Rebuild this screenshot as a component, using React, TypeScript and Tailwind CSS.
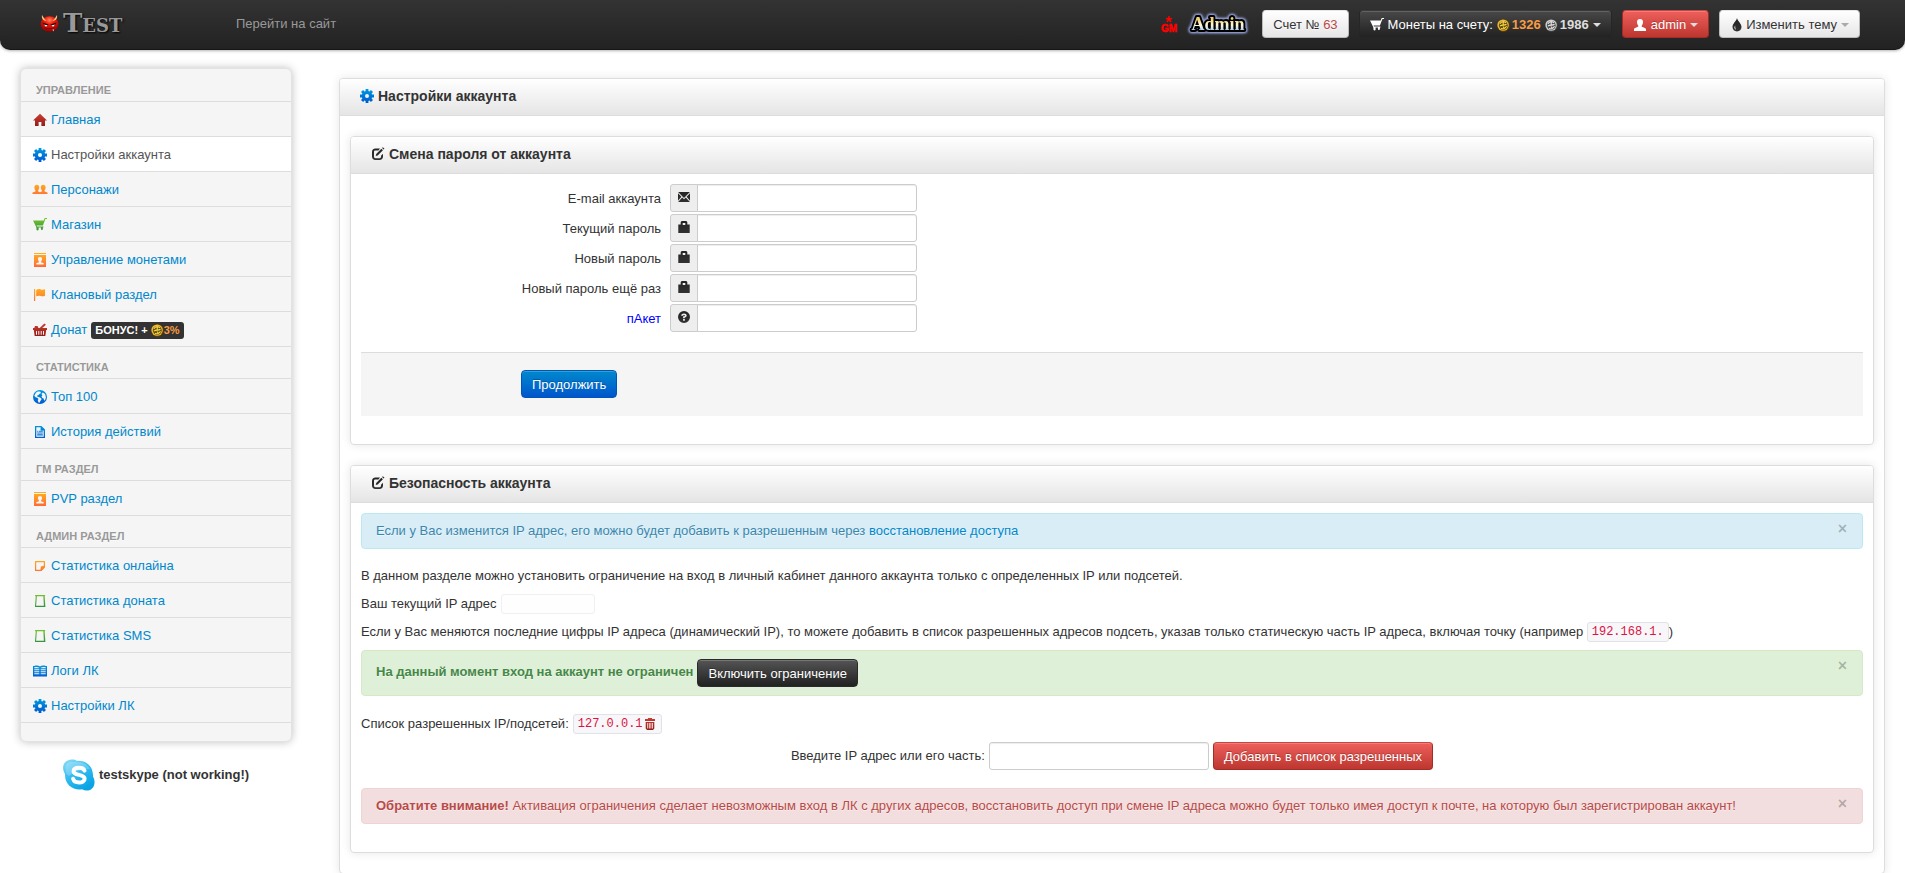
import { useId } from "react";
import type { ReactNode } from "react";

type Tone = "red" | "blue" | "orange" | "green" | "dark" | "white";

const tones: Record<Tone, [string, string]> = {
  red: ["#cf3f35", "#8f1a16"],
  blue: ["#009be0", "#0058d0"],
  orange: ["#ffb21e", "#ff6a34"],
  green: ["#7ac52f", "#2f8f3d"],
  dark: ["#222222", "#333333"],
  white: ["#ffffff", "#ffffff"],
};

type IconName =
  | "home" | "cog" | "users" | "cart" | "contact" | "flag" | "basket" | "globe" | "file"
  | "note" | "frame" | "book" | "edit" | "mail" | "lock" | "help" | "trash" | "user" | "drop";

const shapes: Record<IconName, ReactNode> = {
  home: <path d="M7 .8 14 7.6h-2V13H8.4V9H5.6v4H2V7.6H0L7 .8Z" />,
  cog: (
    <path
      fillRule="evenodd"
      d="M5.6 0h2.8v1.9l1.1.5L10.9 1l2.1 2.1-1.4 1.4.5 1.1H14v2.8h-1.9l-.5 1.1 1.4 1.4-2.1 2.1-1.4-1.4-1.1.5V14H5.6v-1.9l-1.1-.5L3.1 13 1 10.900l1.400-1.400-.5-1.100H0V5.600h1.900l.5-1.100L1 3.100 3.100 1l1.400 1.400 1.100-.5V0ZM7 5a2 2 0 1 0 0 4 2 2 0 0 0 0-4Z"
    />
  ),
  users: (
    <path d="M3.800 1.800c1.500 0 2.400 1 2.400 2.600 0 1.100-.4 2.100-1 2.700v1.400L7 9.200l1.800-.7V7.100c-.6-.6-1-1.600-1-2.700 0-1.600.9-2.600 2.400-2.600s2.400 1 2.400 2.600c0 1.100-.4 2.100-1 2.700v1.400l2.900 1V11H-.5V9.500l2.900-1V7.100c-.6-.6-1-1.600-1-2.700 0-1.600.9-2.600 2.400-2.600Z" />
  ),
  cart: (
    <path d="M0 2.500h10.700L11.700 0H14v1h-1.600l-2.500 6.500H3.600l.3 1h6.500v1H9.900V11a1 1 0 1 1-2 0V9.500H5.600V11a1.100 1.100 0 1 1-2.100 0l-.3-2L0 2.500Z" />
  ),
  contact: (
    <>
      <path d="M1 0h12v1H1z" />
      <path fillRule="evenodd" d="M1 2h12v12H1V2Zm6 2c-1.400 0-2.100.9-2.100 2.100 0 .9.300 1.600.9 2v1.300L3.300 10v1.500h7.400V10l-2.500-.6V8.100c.6-.4.9-1.100.9-2C9.100 4.900 8.400 4 7 4Z" />
    </>
  ),
  flag: <path d="M1 1h1.200v12H1V1Zm2.200.9c1.800-1 3.200-1 4.700-.4 1.500.5 2.500.3 4.100-.2v6.500c-1.600.6-2.800.7-4.300.2-1.400-.5-2.700-.5-4.500.3V1.900Z" />,
  basket: (
    <path fillRule="evenodd" d="M11.300.4 13 1.800 9.200 5H14v2h-.8l-.9 6H1.700L.8 7H0V5h6.700l4.600-4.600ZM2 3h2.500l1 2H1.300L2 3Zm1 5v3.800h1V8H3Zm2.300 0v3.800h1V8h-1Zm2.400 0v3.800h1V8h-1ZM10 8v3.800h1V8h-1Z" />
  ),
  globe: (
    <path fillRule="evenodd" d="M7 0a7 7 0 1 1 0 14A7 7 0 0 1 7 0ZM4.600 1.600 2.900 2.700 1.300 5.800l1.300 1.500 1.700.4 1.200 1.400-.8 1 .8 2.400 1 .3 1-2 1-1.400-.3-1.100-2.400-1.300-1.300-.3-.5-1 1.500-.8.9-1 1.700-1-1-1.300H4.600Zm5.200.8L8.400 4l1 1.300-.9 1.300.8 1.400 1.400.4.4 2.400 1.300-1.300.5-2.300-.8-3.200-2.300-1.600Z" />
  ),
  file: (
    <path fillRule="evenodd" d="M2 1h6.500L12 4.500V13H2V1Zm1.300 1.300v9.400h7.400V5.400H7.600V2.300H3.300Zm.9 3.500h1.200v1H4.200v-1Zm1.800 0h3.800v1H6v-1ZM4.200 7.600h5.600v1H4.200v-1Zm0 1.600h5.600v1.300H4.200V9.200Z" />
  ),
  note: <path fillRule="evenodd" d="M2 2h10v6.500L8.500 12H2V2Zm1.200 1.200v7.600h4.200l.5-3.200 2.900-.8V3.200H3.200Z" />,
  frame: <path fillRule="evenodd" d="M1.800 1h10.500l-.6 1.800.7 10.200H2l.7-10.200L1.800 1Zm2.100 1.300-.8 9.400h7.800l-.6-9.400H3.900Z" />,
  book: (
    <path fillRule="evenodd" d="M0 2h1.200C3.600 1.300 5.400 1.400 7 2.400c1.600-1 3.400-1.100 5.800-.4H14v10.500H0V2Zm1.300 1.300v1h5v-.6c-1.500-.8-3-.8-5-.4Zm6.400.4v.6h5v-1c-2-.4-3.500-.4-5 .4ZM1.300 5.300v1h5v-1h-5Zm6.400 0v1h5v-1h-5Zm-6.400 2v1h5v-1h-5Zm6.400 0v1h5v-1h-5Zm-6.400 2v1h5v-1h-5Zm6.400 0v1h5v-1h-5Z" />
  ),
  edit: (
    <>
      <path d="M9 1.500H4.500C2.300 1.500 1 2.800 1 5v4.500C1 11.700 2.300 13 4.500 13h4c2.200 0 3.500-1.300 3.500-3.500V6.800l-2 2v1c0 .9-.5 1.400-1.400 1.400H4.400C3.500 11.200 3 10.700 3 9.800V4.900c0-.9.5-1.400 1.400-1.400h3L9 1.500Z" />
      <path d="m10.400 1.700 1.500 1.500-5.200 5.200-2 .6.500-2.100 5.200-5.200Zm.7-.7.700-.7 1.700 1.500-.9.8L11.100 1Z" />
    </>
  ),
  mail: (
    <path d="M1.100 2h11.800L7 7.900 1.100 2ZM1 3.200l3.400 3.500L1 10.700V3.200Zm12 0v7.500L9.600 6.700 13 3.200ZM5.200 7.500 7 9.300l1.800-1.800L12.900 12H1.100l4.100-4.500Z" />
  ),
  lock: <path fillRule="evenodd" d="M3.700 2 4.700 1h4.600l1 1v2.600h2.400V13H1.300V4.600h2.400V2Zm2 1v1.900h2.600V3H5.700Z" />,
  help: (
    <path fillRule="evenodd" d="M7 1a6 6 0 1 1 0 12A6 6 0 0 1 7 1Zm-.9 7.300h1.700v-.7c1.100-.3 1.900-1 1.900-2 0-1.400-1.200-2.200-2.700-2.200-1.600 0-2.700.9-2.800 2.300h1.900c0-.5.3-.8.9-.8s.9.300.9.700c0 .6-.7.8-1.800 1v1.700Zm0 .8v1.700h1.700V9.100H6.100Z" />
  ),
  trash: (
    <path fillRule="evenodd" d="M5 1h4v1h3v2H2V2h3V1ZM2.700 5h8.600v6.500L10 13H4l-1.300-1.500V5Zm1.600 1v5.500h.8V6h-.8Zm1.600 0v5.500h.8V6h-.8Zm1.600 0v5.500h.8V6h-.8Zm1.600 0v5.500h.8V6h-.8Z" />
  ),
  user: (
    <path d="M7 1c2 0 3 1.200 3 3.100 0 1.500-.5 2.700-1.200 3.400v1.300c0 .4 4.200 1 4.200 2.600V13H1v-1.600c0-1.600 4.200-2.200 4.200-2.600V7.500C4.500 6.800 4 5.600 4 4.100 4 2.200 5 1 7 1Z" />
  ),
  drop: <path fillRule="evenodd" d="M7 0c.6 3.200 4.500 5.400 4.500 9 0 2.600-2 4.400-4.500 4.400S2.500 11.600 2.500 9C2.500 5.400 6.400 3.200 7 0ZM5.200 7.500c-1.400 1.600-1 3.700.9 4.300-.8-1.200-1-2.600-.9-4.300Z" />,
};

function Icon({ name, tone }: { name: IconName; tone: Tone }) {
  const id = useId();
  return (
    <svg viewBox="0 0 14 14" className="size-3.5 shrink-0 overflow-visible" fill={`url(#${id})`} aria-hidden="true">
      <defs>
        <linearGradient id={id} gradientUnits="userSpaceOnUse" x1="0" y1="0" x2="0" y2="14">
          <stop offset="0" stopColor={tones[tone][0]} />
          <stop offset="1" stopColor={tones[tone][1]} />
        </linearGradient>
      </defs>
      {shapes[name]}
    </svg>
  );
}

function Coin({ metal }: { metal: "gold" | "silver" }) {
  const gold = metal === "gold";
  return (
    <svg viewBox="0 0 13 13" className="size-[13px] shrink-0" aria-hidden="true">
      <circle cx="6.500" cy="6.500" r="6.500" fill={gold ? "#5a3d04" : "#3c3c3c"} />
      <circle cx="6.100" cy="6.100" r="5.700" fill={gold ? "#f0b93a" : "#cfcfcf"} />
      <circle cx="6.300" cy="6.300" r="4.400" fill={gold ? "#5d4a0c" : "#4f4f4f"} />
      <path
        d="M3 4.800C4.500 2 7.500 2 9 4M3 7.200c2-2.200 4 0 6.500-2M4 9.300c2 1 4.500 0 5.500-2M6.200 2.800v2.700M6 7.500l1.500 2"
        fill="none"
        stroke={gold ? "#f7dc4e" : "#e6e6e6"}
        strokeWidth="1.100"
      />
    </svg>
  );
}

function DevilFace() {
  return (
    <svg viewBox="0 0 19 18" className="h-[18px] w-[19px] shrink-0" aria-hidden="true">
      <defs>
        <radialGradient id="devil-skin" cx=".5" cy=".25" r=".75">
          <stop offset="0" stopColor="#ff8a5c" />
          <stop offset=".35" stopColor="#f01c10" />
          <stop offset="1" stopColor="#8c0000" />
        </radialGradient>
      </defs>
      <ellipse cx="9.500" cy="10" rx="9" ry="7.800" fill="url(#devil-skin)" />
      <path d="M2 1c-.5 3 .5 5.500 4.500 6C4.500 5 3.500 3.500 2 1ZM17 1c.5 3-.5 5.500-4.500 6 2-2 3-3.500 4.500-6Z" fill="#ffc877" />
      <path d="m2.500 8.500 6 2-.8 1.200c-2.200.2-4.200-.7-5.200-3.200Zm14 0-6 2 .8 1.200c2.200.2 4.200-.7 5.200-3.200Z" fill="#200000" />
      <path d="m4 10.500 3.800 1-2 1.200L4 10.500Zm11 0-3.800 1 2 1.200 1.800-2.200Z" fill="#fff" />
      <path d="M4.500 13.200c3.300 1.700 6.700 1.700 10 0-1.500 2-8.500 2-10 0Z" fill="#2a0000" />
      <path d="M12.500 15.500h1.500l-.7 2-.8-2Z" fill="#eee" />
    </svg>
  );
}

function GmMark() {
  return (
    <svg viewBox="0 0 18 18" className="h-[18px] w-[18px] overflow-visible" aria-label="GM" role="img">
      <path d="M9 1v3.500M6 3.600l3 .7 3-.7M7 7l2-2.600L11 7" stroke="#f00" strokeWidth="1.500" fill="none" />
      <text
        x="9"
        y="16.500"
        textAnchor="middle"
        fontSize="10"
        fontWeight="700"
        fill="#f00"
        stroke="#f00"
        strokeWidth=".5"
        fontFamily="Liberation Sans, sans-serif"
      >
        GM
      </text>
    </svg>
  );
}

function AdminMark() {
  return (
    <svg
      viewBox="0 0 60 24"
      className="h-6 w-[60px] overflow-visible [filter:drop-shadow(0_0_1px_#98a4dc)_drop-shadow(0_0_1px_#98a4dc)_drop-shadow(0_0_1px_#98a4dc)]"
      aria-label="Admin"
      role="img"
    >
      <defs>
        <linearGradient id="admin-fill" x1="0" y1="0" x2="0" y2="1">
          <stop offset=".25" stopColor="#f3d470" />
          <stop offset=".55" stopColor="#fff8dc" />
          <stop offset=".85" stopColor="#a9cdf0" />
        </linearGradient>
      </defs>
      <text
        x="30"
        y="18"
        textAnchor="middle"
        fontSize="18"
        fontWeight="700"
        fontFamily="Liberation Serif, serif"
        fill="url(#admin-fill)"
        stroke="#000"
        strokeWidth="4"
        strokeLinejoin="round"
        paintOrder="stroke"
      >
        Admin
      </text>
    </svg>
  );
}

function SkypeLogo() {
  return (
    <svg viewBox="0 0 32 32" className="size-8" aria-hidden="true">
      <defs>
        <linearGradient id="skype-fill" x1="0" y1="0" x2=".6" y2="1">
          <stop offset="0" stopColor="#8fdcf8" />
          <stop offset=".5" stopColor="#35bdf0" />
          <stop offset="1" stopColor="#0aa3e4" />
        </linearGradient>
      </defs>
      <path
        d="M9 .5c2 0 3.500.5 5 1.400C22.500 1 30.500 7 30 17.500c2.800 5 1.500 10-1.500 12.500-2.500 2-6.500 2-9.500.2C10 31.500 1.500 25.500 2 15-.5 11-.5 7 1.500 4 3 1.800 6 .5 9 .5Z"
        fill="url(#skype-fill)"
      />
      <path d="M3 12C1 6 5 2 10 3c8-1 14 1 17 7-8 .5-15 2-21 7-2-1-3-3-3-5Z" fill="#fff" opacity=".22" />
      <path
        d="M21.500 11.700c-.6-2-2.800-3-5.500-3-3.400 0-5.400 1.400-5.400 3.500 0 5 11 2.300 11 7.500 0 2.400-2.400 3.800-5.500 3.800-3.400 0-5.400-1.500-6-3.700"
        fill="none"
        stroke="#fff"
        strokeWidth="4"
        strokeLinecap="round"
      />
    </svg>
  );
}

type Item = { icon: IconName; tone: Tone; label: string; active?: boolean; bonus?: boolean };

const sections: { title: string; items: Item[] }[] = [
  {
    title: "Управление",
    items: [
      { icon: "home", tone: "red", label: "Главная" },
      { icon: "cog", tone: "blue", label: "Настройки аккаунта", active: true },
      { icon: "users", tone: "orange", label: "Персонажи" },
      { icon: "cart", tone: "green", label: "Магазин" },
      { icon: "contact", tone: "orange", label: "Управление монетами" },
      { icon: "flag", tone: "orange", label: "Клановый раздел" },
      { icon: "basket", tone: "red", label: "Донат", bonus: true },
    ],
  },
  {
    title: "Статистика",
    items: [
      { icon: "globe", tone: "blue", label: "Топ 100" },
      { icon: "file", tone: "blue", label: "История действий" },
    ],
  },
  { title: "ГМ раздел", items: [{ icon: "contact", tone: "orange", label: "PVP раздел" }] },
  {
    title: "Админ раздел",
    items: [
      { icon: "note", tone: "orange", label: "Статистика онлайна" },
      { icon: "frame", tone: "green", label: "Статистика доната" },
      { icon: "frame", tone: "green", label: "Статистика SMS" },
      { icon: "book", tone: "blue", label: "Логи ЛК" },
      { icon: "cog", tone: "blue", label: "Настройки ЛК" },
    ],
  },
];

const fields: { id: string; label: string; icon: IconName; type: string; highlight?: boolean }[] = [
  { id: "email", label: "E-mail аккаунта", icon: "mail", type: "email" },
  { id: "current", label: "Текущий пароль", icon: "lock", type: "password" },
  { id: "next", label: "Новый пароль", icon: "lock", type: "password" },
  { id: "repeat", label: "Новый пароль ещё раз", icon: "lock", type: "password" },
  { id: "packet", label: "пАкет", icon: "help", type: "text", highlight: true },
];

const button = "flex h-7 items-center rounded border px-2.5 pt-0.5 whitespace-nowrap cursor-pointer";
const lightButton =
  "border-[#bbb] border-t-[#e6e6e6] bg-linear-to-b from-white to-[#e6e6e6] text-[#333] [text-shadow:0_1px_1px_rgba(255,255,255,0.75)]";
const redButton =
  "border-[#a52b26] border-t-[#c9453f] bg-linear-to-b from-[#ee5f5b] to-[#bd362f] text-white shadow-[inset_0_1px_0_rgba(255,255,255,0.2)] [text-shadow:0_-1px_0_rgba(0,0,0,0.25)]";
const darkButton =
  "border-[#2a2a2a] bg-linear-to-b from-[#555] to-[#222] text-white shadow-[inset_0_1px_0_rgba(255,255,255,0.2)] [text-shadow:0_-1px_0_rgba(0,0,0,0.25)]";
const blueButton =
  "border-[#0055b8] bg-linear-to-b from-[#0088cc] to-[#0055cc] text-white shadow-[inset_0_1px_0_rgba(255,255,255,0.2)] [text-shadow:0_-1px_0_rgba(0,0,0,0.25)]";
const field = "h-7 w-[220px] border border-[#ccc] bg-white px-1 shadow-[inset_0_1px_1px_rgba(0,0,0,0.075)]";

function Caret({ muted }: { muted?: boolean }) {
  return (
    <svg viewBox="0 0 8 4" className={muted ? "ml-1 h-1 w-2 text-[#aaa]" : "ml-1 h-1 w-2 text-[#ddd]"} aria-hidden="true">
      <path d="M0 0h8L4 4Z" fill="currentColor" />
    </svg>
  );
}

function Navbar() {
  return (
    <header className="flex h-[50px] items-center rounded-b-[10px] bg-linear-to-b from-[#333] to-[#222] pr-[45px] pl-10 shadow-[0_1px_3px_rgba(0,0,0,0.3),inset_0_-1px_0_rgba(0,0,0,0.3)]">
      <a href="#" className="mb-1 flex w-[196px] items-center gap-1">
        <DevilFace />
        <span className="font-['DejaVu_Serif',serif] text-[26px] leading-6 font-bold text-[#999] [font-variant:small-caps] [text-shadow:1px_1px_2px_#000]">
          Test
        </span>
      </a>
      <a href="#" className="pb-0.5 text-[#999]">
        Перейти на сайт
      </a>
      <div className="mb-0.5 ml-auto flex items-center gap-2.5">
        <GmMark />
        <AdminMark />
        <button type="button" className={`${button} ${lightButton} ml-1`}>
          Счет №&nbsp;<span className="text-[#b94a48]">63</span>
        </button>
        <button
          type="button"
          className={`${button} border-[#262626] border-t-[#3a3a3a] bg-linear-to-b from-[#484848] to-[#222] text-white shadow-[inset_0_1px_0_rgba(255,255,255,0.15)]`}
        >
          <Icon name="cart" tone="white" />
          <span className="mx-1">Монеты на счету:</span>
          <Coin metal="gold" />
          <b className="mr-1 ml-0.5 text-[#f89c43]">1326</b>
          <Coin metal="silver" />
          <b className="ml-0.5 text-[#ddd]">1986</b>
          <Caret />
        </button>
        <button type="button" className={`${button} ${redButton}`}>
          <Icon name="user" tone="white" />
          <span className="ml-1">admin</span>
          <Caret />
        </button>
        <button type="button" className={`${button} ${lightButton}`}>
          <Icon name="drop" tone="dark" />
          <span className="ml-0.5">Изменить тему</span>
          <Caret muted />
        </button>
      </div>
    </header>
  );
}

function Sidebar() {
  return (
    <aside className="w-[272px] shrink-0 pt-[18px]">
      <nav className="rounded-md border border-[#e3e3e3] bg-[#f5f5f5] pt-px pb-[18px] shadow-[0_0_8px_rgba(0,0,0,0.25)]">
        {sections.map((section) => (
          <section key={section.title}>
            <h2 className="flex h-8 items-end border-b border-[#ddd] px-[15px] pb-0.5 text-[11px] leading-[18px] font-bold text-[#999] uppercase [text-shadow:0_1px_0_rgba(255,255,255,0.5)]">
              {section.title}
            </h2>
            <ul>
              {section.items.map((item) => (
                <li key={item.label} className="border-b border-[#ddd]">
                  <a
                    href="#"
                    className={
                      item.active
                        ? "flex h-[34px] items-center gap-1 bg-white px-3 pt-0.5 text-[#555]"
                        : "flex h-[34px] items-center gap-1 px-3 pt-0.5 text-[#0088cc]"
                    }
                  >
                    <Icon name={item.icon} tone={item.tone} />
                    {item.label}
                    {item.bonus && (
                      <span className="flex h-[17px] items-center rounded-[3px] bg-[#333] px-1 text-[11px] font-bold text-white">
                        БОНУС! +&nbsp;
                        <Coin metal="gold" />
                        <span className="text-[#f89c43]">3%</span>
                      </span>
                    )}
                  </a>
                </li>
              ))}
            </ul>
          </section>
        ))}
      </nav>
      <p className="mt-[17px] flex items-center justify-center gap-1 font-bold">
        <SkypeLogo />
        testskype (not working!)
      </p>
    </aside>
  );
}

function Panel({ icon, tone, title, outer, children }: { icon: IconName; tone: Tone; title: string; outer?: boolean; children: ReactNode }) {
  return (
    <section className="rounded border border-[#ddd] bg-white shadow-[0_0_10px_rgba(0,0,0,0.1)]">
      <h2 className="flex h-[37px] items-center gap-1 rounded-t-[3px] border-b border-[#ddd] bg-linear-to-b from-white to-[#e5e5e5] px-5 pb-0.5 text-sm font-bold">
        <Icon name={icon} tone={tone} />
        {title}
      </h2>
      <div className={outer ? "flex flex-col gap-5 px-2.5 py-5" : "px-2.5 pt-2.5 pb-7"}>{children}</div>
    </section>
  );
}

function CloseButton() {
  return (
    <button type="button" aria-label="Закрыть" className="-mt-0.5 ml-auto cursor-pointer self-start text-base leading-[18px] font-bold text-black/25">
      ×
    </button>
  );
}

function PasswordForm() {
  return (
    <form>
      <div className="flex flex-col gap-0.5">
        {fields.map((f) => (
          <div key={f.id} className="flex h-7 items-center">
            <label
              htmlFor={f.id}
              className={f.highlight ? "mr-[9px] w-[300px] pt-0.5 text-right text-[#00f]" : "mr-[9px] w-[300px] pt-0.5 text-right"}
            >
              {f.label}
            </label>
            <span className="-mr-px flex h-7 w-7 justify-center rounded-l-[3px] border border-[#ccc] bg-[#eee] pt-[5px]">
              <Icon name={f.icon} tone="dark" />
            </span>
            <input id={f.id} type={f.type} className={`${field} rounded-r-[3px]`} />
          </div>
        ))}
      </div>
      <div className="mt-5 border-t border-[#ddd] bg-[#f5f5f5] pt-[17px] pb-[18px] pl-40">
        <button type="button" className={`${button} ${blueButton}`}>
          Продолжить
        </button>
      </div>
    </form>
  );
}

const alert = "flex rounded border py-2 pr-[15px] pl-3.5 [text-shadow:0_1px_0_rgba(255,255,255,0.5)]";
const code =
  "rounded-[3px] border border-[#e1e1e8] bg-[#f7f7f9] px-1 py-0.5 font-['Liberation_Mono',monospace] text-xs text-[#dd1144]";

function Security() {
  return (
    <>
      <div className={`${alert} border-[#bce8f1] bg-[#d9edf7] text-[#3a87ad]`}>
        <p>
          Если у Вас изменится IP адрес, его можно будет добавить к разрешенным через{" "}
          <a href="#" className="text-[#0088cc]">
            восстановление доступа
          </a>
        </p>
        <CloseButton />
      </div>
      <p className="mt-[18px]">
        В данном разделе можно установить ограничение на вход в личный кабинет данного аккаунта только с определенных IP или
        подсетей.
      </p>
      <p className="mt-[9px] flex h-[19px] items-center gap-1">
        Ваш текущий IP адрес
        <span className="h-5 w-[94px] rounded-[3px] border border-[#f0f0f4] bg-[#fefefe]" />
      </p>
      <p className="mt-[9px] flex h-[19px] items-center whitespace-nowrap">
        Если у Вас меняются последние цифры IP адреса (динамический IP), то можете добавить в список разрешенных адресов
        подсеть, указав только статическую часть IP адреса, включая точку (например&nbsp;
        <code className={`${code} leading-[14px]`}>192.168.1.</code>)
      </p>
      <div className={`${alert} mt-[9px] border-[#d6e9c6] bg-[#dff0d8] text-[#468847]`}>
        <b className="pt-1">На данный момент вход на аккаунт не ограничен</b>
        <button type="button" className={`${button} ${darkButton} ml-1`}>
          Включить ограничение
        </button>
        <CloseButton />
      </div>
      <p className="mt-[18px] flex h-[19px] items-center gap-1">
        Список разрешенных IP/подсетей:
        <code className={`${code} flex items-center leading-[14px]`}>
          127.0.0.1
          <button type="button" aria-label="Удалить" className="cursor-pointer">
            <Icon name="trash" tone="red" />
          </button>
        </code>
      </p>
      <form className="mt-[9px] mb-[18px] flex items-center justify-center gap-1">
        <label htmlFor="ip">Введите IP адрес или его часть:</label>
        <input id="ip" type="text" className={`${field} rounded-[3px]`} />
        <button type="button" className={`${button} ${redButton}`}>
          Добавить в список разрешенных
        </button>
      </form>
      <div className={`${alert} border-[#eed3d7] bg-[#f2dede] text-[#b94a48]`}>
        <p>
          <b>Обратите внимание!</b> Активация ограничения сделает невозможным вход в ЛК с других адресов, восстановить доступ
          при смене IP адреса можно будет только имея доступ к почте, на которую был зарегистрирован аккаунт!
        </p>
        <CloseButton />
      </div>
    </>
  );
}

export default function App() {
  return (
    <div className="bg-white font-['Liberation_Sans',Arial,sans-serif] text-[13px] leading-[18px] text-[#333]">
      <Navbar />
      <div className="flex gap-[47px] px-5">
        <Sidebar />
        <main className="min-w-0 flex-1 pt-7">
          <Panel icon="cog" tone="blue" title="Настройки аккаунта" outer>
            <Panel icon="edit" tone="dark" title="Смена пароля от аккаунта">
              <PasswordForm />
            </Panel>
            <Panel icon="edit" tone="dark" title="Безопасность аккаунта">
              <Security />
            </Panel>
          </Panel>
        </main>
      </div>
    </div>
  );
}
